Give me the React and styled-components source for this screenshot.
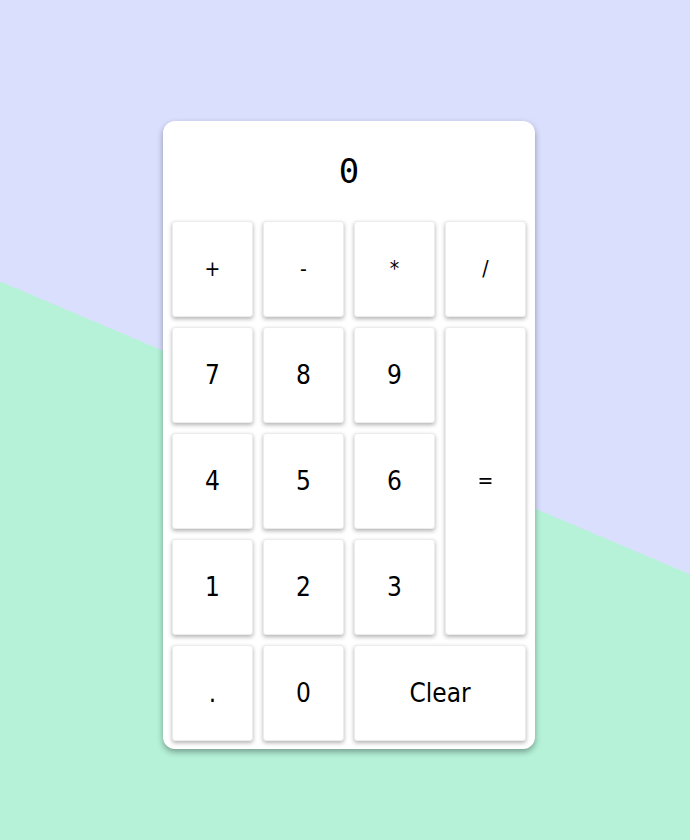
import React, { useState } from 'react'
import styled, { createGlobalStyle } from 'styled-components'

const Global = createGlobalStyle`
  html, body { margin: 0; padding: 0; }
  body {
    min-height: 840px;
    font-family: "DejaVu Sans", sans-serif;
    background: linear-gradient(203deg, #dadffe 50.7%, #b5f2d8 50.7%);
  }
`

const Page = styled.div`
  display: flex;
  justify-content: center;
  padding-top: 121px;
  padding-left: 8px;
`

const Calculator = styled.div`
  width: 372px;
  box-sizing: border-box;
  background: #fff;
  border-radius: 12px;
  box-shadow: 0 3px 6px rgba(0, 0, 0, 0.35);
  padding: 0 9px 8px;
`

const Display = styled.div`
  height: 100px;
  display: flex;
  align-items: center;
  justify-content: center;
  font-size: 34px;
  font-family: "DejaVu Sans Mono", monospace;
  color: #000;
`

const Keys = styled.div`
  display: grid;
  grid-template-columns: repeat(4, 81px);
  grid-auto-rows: 96px;
  gap: 10px;
`

const Key = styled.button`
  grid-column: span ${p => p.$cols || 1};
  grid-row: span ${p => p.$rows || 1};
  background: #fff;
  border: 1px solid #ececec;
  border-radius: 3px;
  box-shadow: 0 2px 4px rgba(0, 0, 0, 0.3);
  font-family: "DejaVu Sans", sans-serif;
  font-stretch: condensed;
  font-weight: 400;
  font-size: ${p => (p.$op ? '21px' : '26px')};
  color: #000;
  display: flex;
  align-items: center;
  justify-content: center;
  cursor: pointer;
  padding: 0;
`

const keys = [
  { k: '+', op: true }, { k: '-', op: true }, { k: '*', op: true }, { k: '/', op: true },
  { k: '7' }, { k: '8' }, { k: '9' }, { k: '=', rows: 3, op: true },
  { k: '4' }, { k: '5' }, { k: '6' },
  { k: '1' }, { k: '2' }, { k: '3' },
  { k: '.' }, { k: '0' }, { k: 'Clear', cols: 2 },
]

export default function App() {
  const [value, setValue] = useState('0')
  const press = k => {
    if (k === 'Clear') return setValue('0')
    if (k === '=') {
      try { setValue(String(Function('return (' + value + ')')())) } catch (e) { setValue('0') }
      return
    }
    setValue(v => (v === '0' && k !== '.' ? k : v + k))
  }
  return (
    <>
      <Global />
      <Page>
        <Calculator>
          <Display>{value}</Display>
          <Keys>
            {keys.map(({ k, cols, rows, op }) => (
              <Key key={k} $cols={cols} $rows={rows} $op={op} onClick={() => press(k)}>{k}</Key>
            ))}
          </Keys>
        </Calculator>
      </Page>
    </>
  )
}
